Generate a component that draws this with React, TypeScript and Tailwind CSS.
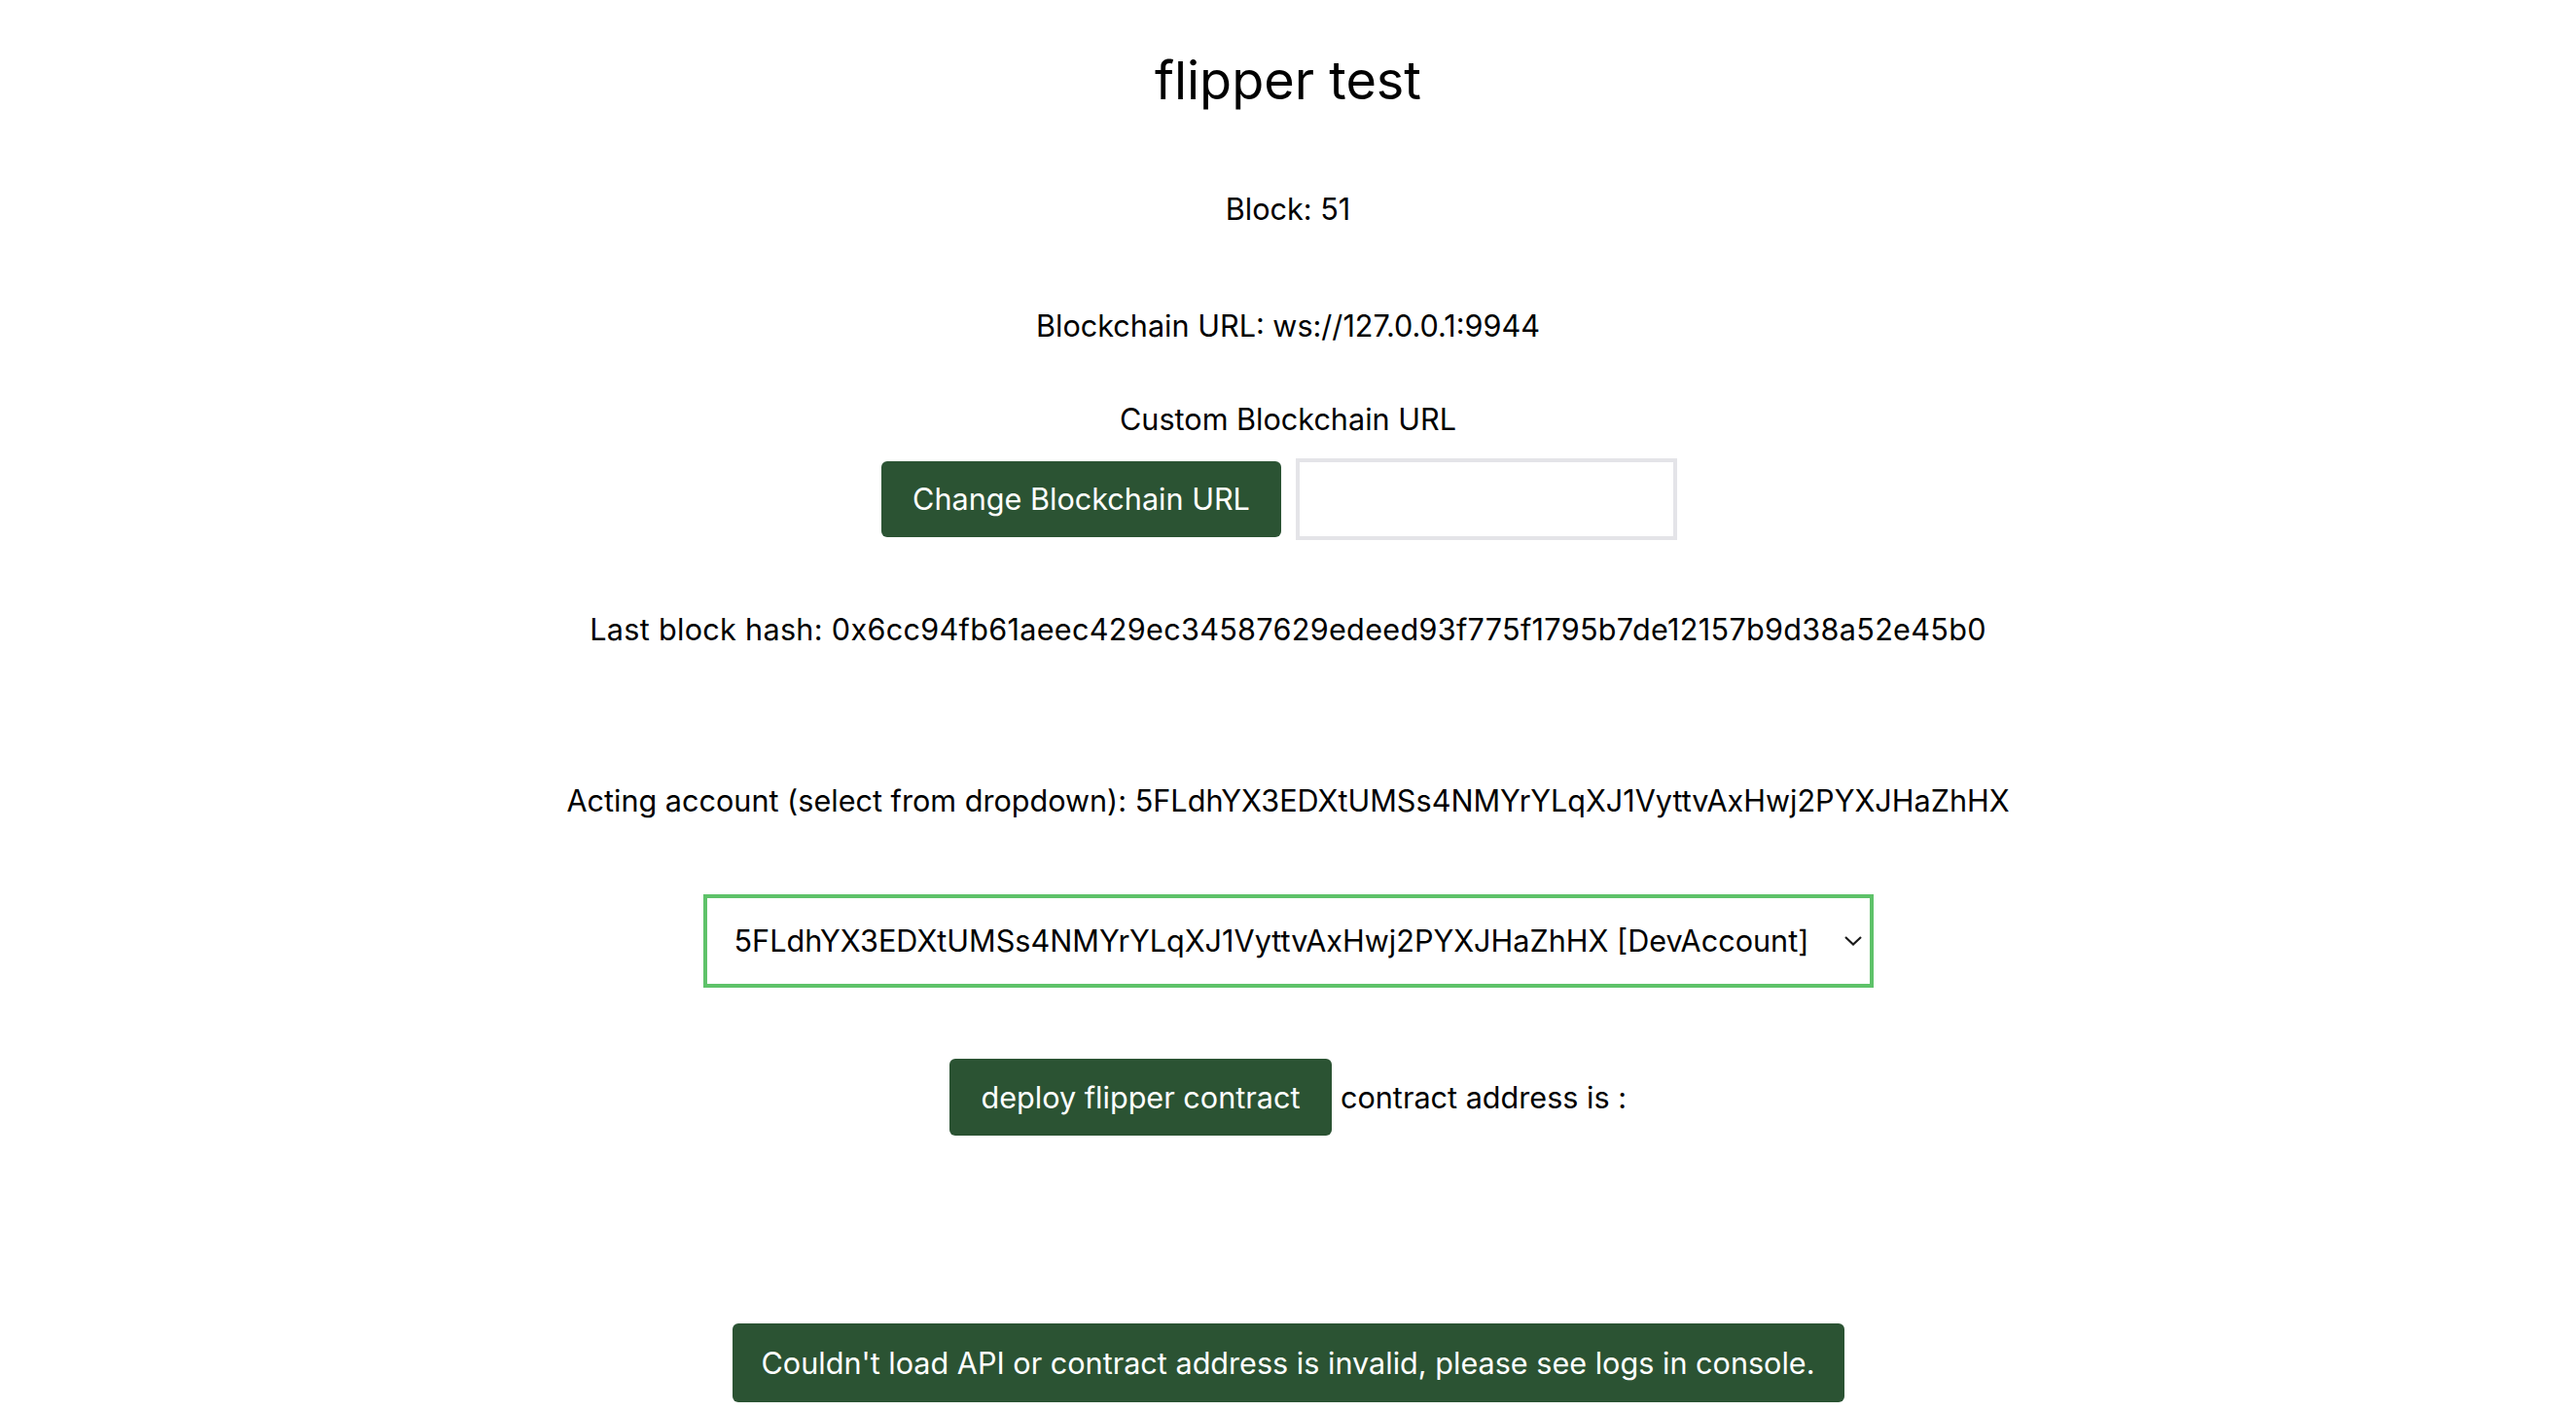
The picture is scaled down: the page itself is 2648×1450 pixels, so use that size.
import { useState } from 'react';

const account = '5FLdhYX3EDXtUMSs4NMYrYLqXJ1VyttvAxHwj2PYXJHaZhHX';
const blockHash = '0x6cc94fb61aeec429ec34587629edeed93f775f1795b7de12157b9d38a52e45b0';

export default function App() {
  const [customUrl, setCustomUrl] = useState('');

  return (
    <div className="flex min-h-[1450px] flex-col items-center bg-white text-center font-['Inter',sans-serif] text-[30.6px] leading-[38px] text-black">
      <h1 className="pt-[47px] text-[54px] leading-[72px] font-normal">flipper test</h1>

      <p className="mt-[77px]">Block: 51</p>

      <p className="mt-[82px]">Blockchain URL: ws://127.0.0.1:9944</p>

      <p className="mt-[58px]">Custom Blockchain URL</p>
      <div className="mt-[21px] flex h-[84px] items-center gap-[15px] pr-[18px]">
        <button className="h-[78px] w-[411px] rounded-[6px] bg-[#2b5333] text-white">Change Blockchain URL</button>
        <input
          value={customUrl}
          onChange={(e) => setCustomUrl(e.target.value)}
          className="h-[84px] w-[392px] border-4 border-[#e4e4e8] bg-white px-3 outline-none"
        />
      </div>

      <p className="mt-[73px] tracking-[0.3px]">Last block hash: {blockHash}</p>

      <p className="mt-[138px]">Acting account (select from dropdown): {account}</p>

      <div className="mt-[77px] flex h-[96px] w-[1203px] items-center justify-between border-4 border-[#5ec269] pr-[8px] pl-[28px]">
        <span>{account} [DevAccount]</span>
        <svg width="18" height="10" viewBox="0 0 18 10" fill="none" stroke="#1a1a1a" strokeWidth="2.2">
          <path d="M1 1l8 7.5L17 1" />
        </svg>
      </div>

      <div className="mt-[73px] flex h-[79px] items-center gap-[9px]">
        <button className="h-[79px] w-[393px] rounded-[6px] bg-[#2b5333] text-white">deploy flipper contract</button>
        <span>contract address is :</span>
      </div>

      <div className="mt-[193px] flex h-[81px] w-[1143px] items-center justify-center rounded-[6px] bg-[#2b5333] text-white">
        Couldn't load API or contract address is invalid, please see logs in console.
      </div>
    </div>
  );
}
